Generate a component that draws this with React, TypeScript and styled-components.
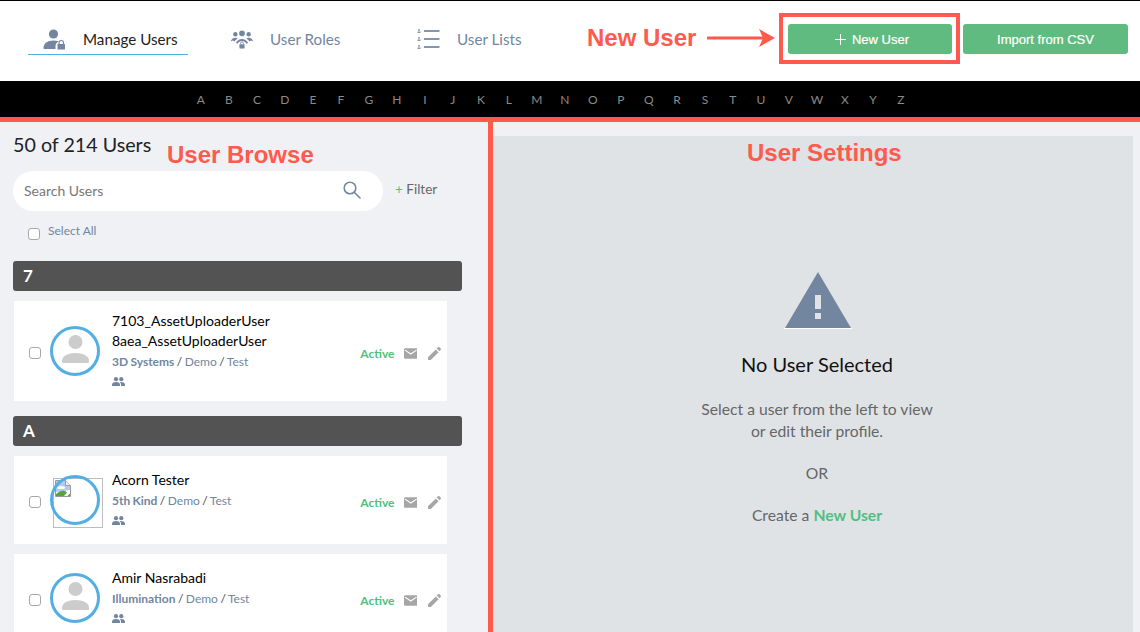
import styled, { createGlobalStyle } from "styled-components";

const GlobalStyle = createGlobalStyle`
  html, body {
    margin: 0;
    height: 100%;
    overflow: hidden;
    background: #fff;
    font-family: Lato, "Open Sans", sans-serif;
  }
  #root {
    height: 100%;
  }
`;

const coral = "#ff5a4d";
const slate = "#7286a0";

const Page = styled.div`
  position: relative;
  display: flex;
  flex-direction: column;
  height: 632px;
  border-top: 1px solid #000;
  box-sizing: border-box;
  overflow: hidden;
`;

const Header = styled.header`
  display: flex;
  align-items: flex-start;
  height: 80px;
  flex-shrink: 0;
  padding-left: 28px;
`;

const Tab = styled.div<{ $width: number; $pad: number; $active?: boolean }>`
  display: flex;
  align-items: center;
  box-sizing: border-box;
  width: ${(p) => p.$width}px;
  height: 54px;
  padding: 23px 0 0 ${(p) => p.$pad}px;
  border-bottom: 1px solid ${(p) => (p.$active ? "#4fb0e5" : "transparent")};
  color: ${(p) => (p.$active ? "#222" : slate)};
  font-size: 15.2px;
  white-space: nowrap;
`;

const TabIcon = styled.span<{ $width: number }>`
  display: flex;
  width: ${(p) => p.$width}px;
  flex-shrink: 0;
`;

const ButtonGroup = styled.div`
  display: flex;
  gap: 11px;
  margin: 23px 0 0 auto;
  padding-right: 12px;
`;

const GreenButton = styled.button<{ $width: number }>`
  display: flex;
  align-items: center;
  justify-content: center;
  gap: 6px;
  width: ${(p) => p.$width}px;
  height: 30px;
  padding: 0;
  border: 0;
  border-radius: 3px;
  background: #5fbb80;
  color: #fff;
  font-family: "Liberation Sans", Arial, sans-serif;
  font-size: 13px;
  -webkit-text-stroke: 0.2px #fff;
  svg {
    margin-left: 4px;
  }
`;

const Alphabet = styled.nav`
  display: flex;
  align-items: center;
  height: 36px;
  flex-shrink: 0;
  padding-left: 187px;
  background: #000;
  border-bottom: 5px solid ${coral};
`;

const Letter = styled.span`
  width: 28px;
  text-align: center;
  color: #8a8a8a;
  font-size: 12px;
  letter-spacing: 0.2px;
`;

const Body = styled.main`
  display: flex;
  flex: 1;
  min-height: 0;
  background: #eff1f5;
`;

const Browse = styled.section`
  box-sizing: border-box;
  width: 493px;
  flex-shrink: 0;
  padding: 11px 26px 0 13px;
  border-right: 5px solid ${coral};
`;

const Count = styled.h2`
  margin: 0 0 14px 0;
  color: #222;
  font-size: 19.7px;
  font-weight: 400;
  line-height: 24px;
`;

const SearchRow = styled.div`
  display: flex;
  align-items: center;
  gap: 12px;
`;

const SearchBox = styled.div`
  display: flex;
  align-items: center;
  justify-content: space-between;
  box-sizing: border-box;
  width: 370px;
  height: 40px;
  padding: 0 22px 2px 11px;
  border-radius: 20px;
  background: #fff;
  color: #777;
  font-size: 14px;
`;

const FilterLink = styled.span`
  margin-top: -4px;
  color: #666;
  font-size: 13.5px;
  span {
    color: #5fbb80;
  }
`;

const SelectAll = styled.label`
  display: flex;
  align-items: flex-start;
  gap: 8px;
  margin: 13px 0 21px 15px;
  color: ${slate};
  font-size: 12px;
  line-height: 14px;
`;

const Check = styled.input.attrs({ type: "checkbox" })`
  appearance: none;
  box-sizing: border-box;
  flex-shrink: 0;
  width: 12px;
  height: 12px;
  margin: 4px 0 0;
  border: 1px solid #a8a8a8;
  border-radius: 3px;
  background: #fff;
`;

const GroupHeader = styled.div`
  box-sizing: border-box;
  height: 30px;
  padding-left: 10px;
  margin-bottom: 10px;
  border-radius: 3px;
  background: #535353;
  color: #fff;
  font-size: 17px;
  font-weight: 700;
  line-height: 29px;
`;

const UserCard = styled.article<{ $height: number }>`
  display: flex;
  align-items: center;
  box-sizing: border-box;
  width: 433px;
  height: ${(p) => p.$height}px;
  margin: 0 0 10px 1px;
  padding: 0 6px 0 15px;
  background: #fff;
  & + ${GroupHeader} {
    margin-top: 15px;
  }
`;

const AvatarFrame = styled.div`
  position: relative;
  flex-shrink: 0;
  box-sizing: border-box;
  width: 50px;
  height: 50px;
  margin: 0 12px 0 9px;
  padding-bottom: 4px;
  display: flex;
  align-items: center;
  justify-content: center;
  &::after {
    content: "";
    position: absolute;
    inset: 0;
    border: 3px solid #53afe3;
    border-radius: 50%;
  }
`;

const BrokenImage = styled.div`
  position: absolute;
  top: 3px;
  left: 3px;
  box-sizing: border-box;
  width: 50px;
  height: 50px;
  border: 1px solid #bdbdbd;
  svg {
    display: block;
    margin: 1px 0 0 1px;
  }
`;

const UserInfo = styled.div`
  flex: 1;
  min-width: 0;
  padding-bottom: 6px;
`;

const UserName = styled.div`
  color: #000;
  font-size: 14px;
  line-height: 20px;
`;

const OrgLine = styled.div`
  margin-top: 2px;
  color: #444;
  font-size: 12px;
  line-height: 18px;
  word-spacing: -0.6px;
`;

const OrgLink = styled.span<{ $strong?: boolean }>`
  color: ${slate};
  font-weight: ${(p) => (p.$strong ? 700 : 400)};
`;

const GroupIconRow = styled.div`
  display: flex;
  margin-top: 6px;
`;

const CardActions = styled.div`
  display: flex;
  align-items: center;
  gap: 11px;
  margin-top: 5px;
`;

const ActiveLabel = styled.span`
  margin-right: -2px;
  color: #4fc07f;
  font-size: 12px;
  font-weight: 700;
`;

const Settings = styled.section`
  flex: 1;
  padding: 14px 7px 0 0;
  min-width: 0;
`;

const EmptyPanel = styled.div`
  display: flex;
  flex-direction: column;
  align-items: center;
  box-sizing: border-box;
  height: 100%;
  padding: 135px 0 0 8px;
  background: #e0e3e6;
  color: #666;
  font-size: 15.7px;
  line-height: 22px;
  text-align: center;
`;

const WarningIcon = styled.svg`
  margin-left: 2px;
`;

const EmptyTitle = styled.h3`
  margin: 21px 0 20px;
  color: #111;
  font-size: 20px;
  font-weight: 400;
  line-height: 28px;
`;

const EmptyText = styled.p`
  margin: 0 0 20px;
`;

const GreenText = styled.span`
  color: #4fc07f;
  font-weight: 700;
`;

/* red notes drawn over the screenshot */
const Note = styled.span<{ $left: number; $top: number }>`
  position: absolute;
  left: ${(p) => p.$left}px;
  top: ${(p) => p.$top}px;
  color: ${coral};
  font-family: "Liberation Sans", Arial, sans-serif;
  font-size: 24px;
  font-weight: 700;
  line-height: 28px;
  white-space: nowrap;
`;

const NoteBox = styled.div`
  position: absolute;
  left: 779px;
  top: 12px;
  box-sizing: border-box;
  width: 181px;
  height: 51px;
  border: 4px solid ${coral};
`;

const NoteArrow = styled.svg`
  position: absolute;
  left: 707px;
  top: 27px;
`;

const ManageIcon = () => (
  <svg width="23" height="21" viewBox="0 0 22 21" fill={slate}>
    <circle cx="10" cy="5" r="4.600" />
    <path d="M0 19c0-4.600 4-7.500 10-7.500 2 0 3.800.3 5.300 1-2 .7-3.300 2.400-3.300 4.500V20H1c-.6 0-1-.4-1-1z" />
    <rect x="14" y="15" width="7.500" height="5.500" rx=".6" />
    <path d="M15.500 15v-1.300a2.250 2.250 0 0 1 4.500 0V15" fill="none" stroke={slate} strokeWidth="1.100" />
  </svg>
);

const RolesIcon = () => (
  <svg width="24" height="19" viewBox="0 0 25 20" fill={slate}>
    <circle cx="12.500" cy="3.500" r="3" />
    <circle cx="5.500" cy="4.500" r="2.300" />
    <circle cx="19.500" cy="4.500" r="2.300" />
    <path d="M.500 12c1.200-2.700 3-3.800 5-3.800 1 0 1.900.3 2.600.8-1.400.8-2.500 1.700-3.400 3.200L2.800 11z" />
    <path d="M24.500 12c-1.200-2.700-3-3.800-5-3.800-1 0-1.900.3-2.600.8 1.400.8 2.500 1.700 3.400 3.200l1.900-1.200z" />
    <path d="M6 13.500c1.500-2.500 3.800-4 6.500-4s5 1.500 6.500 4l-1.600 1c-1.100-1.900-2.900-3-4.900-3s-3.800 1.100-4.900 3z" />
    <rect x="9.800" y="15" width="5.400" height="4.500" rx=".5" />
    <path d="M11 15v-1a1.500 1.500 0 0 1 3 0v1" fill="none" stroke={slate} strokeWidth=".9" />
  </svg>
);

const ListsIcon = () => (
  <svg width="23" height="20" viewBox="0 0 23 20" fill="#8597ad">
    {[0, 8, 16].map((y) => (
      <g key={y}>
        <circle cx="2" cy={y + 1} r="1" />
        <rect x=".5" y={y + 2.5} width="3" height="1.500" />
        <rect x="7" y={y + 1} width="15.500" height="2" />
      </g>
    ))}
  </svg>
);

const PlusIcon = () => (
  <svg width="11" height="11" viewBox="0 0 11 11" stroke="#fff" strokeWidth="1">
    <path d="M5.500 0v11M0 5.500h11" />
  </svg>
);

const SearchIcon = () => (
  <svg width="18" height="18" viewBox="0 0 18 18" fill="none" stroke={slate} strokeWidth="1.600">
    <circle cx="7" cy="7" r="5.800" />
    <path d="M11.200 11.200L17 17" strokeLinecap="round" />
  </svg>
);

const PersonIcon = () => (
  <svg width="27" height="28" viewBox="0 0 27 28" fill="#ccc">
    <circle cx="13.500" cy="7" r="7" />
    <path d="M0 25.500C0 21 6 18 13.500 18S27 21 27 25.500v1c0 1-.5 1.500-1.500 1.500h-24C.5 28 0 27.500 0 26.500z" />
  </svg>
);

const BrokenIcon = () => (
  <svg width="16" height="17" viewBox="0 0 16 17">
    <path d="M.5.500h10l5 5v11H.5z" fill="#fff" stroke="#9a9a9a" />
    <path d="M1 1h9.500v4.500H15V10L1 12z" fill="#b4cbef" />
    <ellipse cx="6" cy="7.500" rx="4" ry="1.500" fill="#fff" />
    <path d="M1 16v-2c3-3 6-4 9-3l2 1.500L9 16z" fill="#5aa336" />
    <path d="M12.500 16l2.500-2.500V16z" fill="#5aa336" />
    <path d="M10.500.500v5h5" fill="#eee" stroke="#9a9a9a" />
  </svg>
);

const PeopleIcon = () => (
  <svg width="13" height="9" viewBox="0 0 13 9" fill={slate}>
    <circle cx="4" cy="2.200" r="2.100" />
    <circle cx="9.300" cy="2.200" r="2.100" />
    <path d="M0 9V7.500C0 5.800 2 5 4 5s4 .8 4 2.500V9z" />
    <path d="M8.800 5c1.900 0 4.200.8 4.200 2.500V9H9V7.500c0-1-.4-1.800-1.100-2.300.3-.1.600-.2.900-.2z" />
  </svg>
);

const MailIcon = () => (
  <svg width="13.500" height="11" viewBox="0 0 14 11">
    <rect width="14" height="11" rx="1.200" fill="#a6a6a6" />
    <path d="M1 2l6 4 6-4" fill="none" stroke="#fff" strokeWidth="1.200" />
  </svg>
);

const PencilIcon = () => (
  <svg width="13" height="13" viewBox="0 0 13 13" fill="#a6a6a6">
    <path d="M0 13V10.200L7.800 2.400l2.800 2.800L2.800 13z" />
    <path d="M8.700 1.500L10 .3c.4-.4 1-.4 1.400 0l1.300 1.300c.4.4.4 1 0 1.400l-1.200 1.300z" />
  </svg>
);

type User = {
  names: string[];
  org: string;
  height: number;
  broken?: boolean;
};

const letters = "ABCDEFGHIJKLMNOPQRSTUVWXYZ".split("");

const Card = ({ user }: { user: User }) => (
  <UserCard $height={user.height}>
    <Check />
    <AvatarFrame>
      {user.broken ? (
        <BrokenImage>
          <BrokenIcon />
        </BrokenImage>
      ) : (
        <PersonIcon />
      )}
    </AvatarFrame>
    <UserInfo>
      {user.names.map((name) => (
        <UserName key={name}>{name}</UserName>
      ))}
      <OrgLine>
        <OrgLink $strong>{user.org}</OrgLink> / <OrgLink>Demo</OrgLink> / <OrgLink>Test</OrgLink>
      </OrgLine>
      <GroupIconRow>
        <PeopleIcon />
      </GroupIconRow>
    </UserInfo>
    <CardActions>
      <ActiveLabel>Active</ActiveLabel>
      <MailIcon />
      <PencilIcon />
    </CardActions>
  </UserCard>
);

export default function App() {
  return (
    <>
      <GlobalStyle />
      <Page>
        <Header>
          <Tab $width={160} $pad={15} $active>
            <TabIcon $width={40}>
              <ManageIcon />
            </TabIcon>
            Manage Users
          </Tab>
          <Tab $width={201} $pad={42}>
            <TabIcon $width={40}>
              <RolesIcon />
            </TabIcon>
            User Roles
          </Tab>
          <Tab $width={150} $pad={28}>
            <TabIcon $width={40}>
              <ListsIcon />
            </TabIcon>
            User Lists
          </Tab>
          <ButtonGroup>
            <GreenButton $width={164}>
              <PlusIcon /> New User
            </GreenButton>
            <GreenButton $width={165}>Import from CSV</GreenButton>
          </ButtonGroup>
        </Header>
        <Alphabet>
          {letters.map((l) => (
            <Letter key={l}>{l}</Letter>
          ))}
        </Alphabet>
        <Body>
          <Browse>
            <Count>50 of 214 Users</Count>
            <SearchRow>
              <SearchBox>
                Search Users
                <SearchIcon />
              </SearchBox>
              <FilterLink>
                <span>+</span> Filter
              </FilterLink>
            </SearchRow>
            <SelectAll>
              <Check />
              Select All
            </SelectAll>
            <GroupHeader>7</GroupHeader>
            <Card
              user={{
                names: ["7103_AssetUploaderUser", "8aea_AssetUploaderUser"],
                org: "3D Systems",
                height: 100,
              }}
            />
            <GroupHeader>A</GroupHeader>
            <Card user={{ names: ["Acorn Tester"], org: "5th Kind", height: 88, broken: true }} />
            <Card user={{ names: ["Amir Nasrabadi"], org: "Illumination", height: 88 }} />
          </Browse>
          <Settings>
            <EmptyPanel>
              <WarningIcon width="68" height="58" viewBox="0 0 68 58">
                <path d="M34 1L67 57H1z" fill={slate} />
                <path d="M0 57.500h68" stroke="#fff" />
                <rect x="31" y="24" width="6" height="14" fill="#e0e3e6" />
                <rect x="31" y="42" width="6" height="6" fill="#e0e3e6" />
              </WarningIcon>
              <EmptyTitle>No User Selected</EmptyTitle>
              <EmptyText>
                Select a user from the left to view
                <br />
                or edit their profile.
              </EmptyText>
              <EmptyText>OR</EmptyText>
              <EmptyText>
                Create a <GreenText>New User</GreenText>
              </EmptyText>
            </EmptyPanel>
          </Settings>
        </Body>
        <Note $left={587} $top={23}>New User</Note>
        <NoteArrow width="70" height="20" viewBox="0 0 70 20">
          <path d="M1 10h56" stroke={coral} strokeWidth="3" strokeLinecap="round" />
          <path d="M68 10L52 1l4 9-4 9z" fill={coral} />
        </NoteArrow>
        <NoteBox />
        <Note $left={167} $top={140}>User Browse</Note>
        <Note $left={747} $top={138}>User Settings</Note>
      </Page>
    </>
  );
}
